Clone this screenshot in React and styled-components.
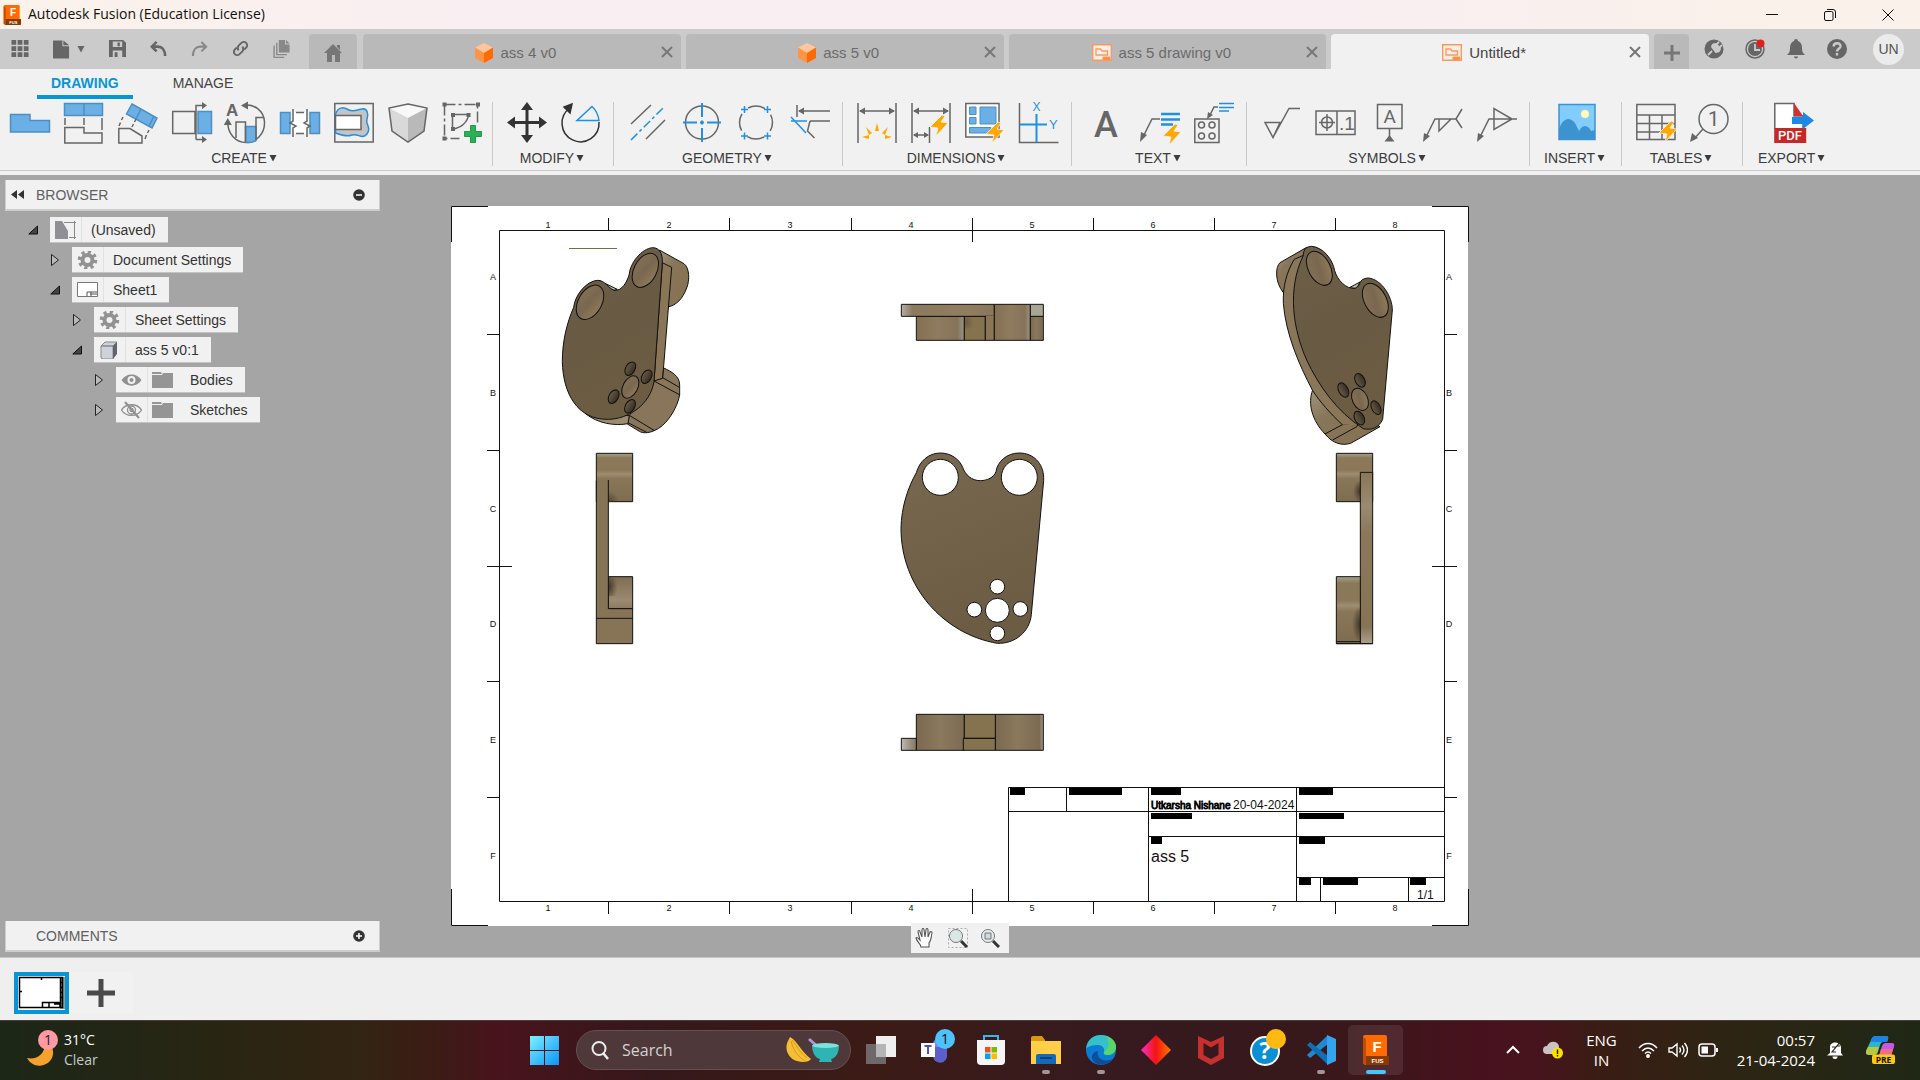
import React from "react";
import styled, { createGlobalStyle } from "styled-components";

const UI = '"Liberation Sans", Arial, sans-serif';
const SYS = '"Open Sans", "Segoe UI", sans-serif';
const BLUE = "#0696d7";
const INK = "#666666";
const FILL = "#6aafe6";
const FILL_EDGE = "#4f8fc0";
const LINE = "#1e90e6";
const ORANGE = "#ffa800";

const GlobalStyle = createGlobalStyle`
  * { box-sizing: border-box; }
  html, body { margin: 0; padding: 0; }
  body { font-family: ${UI}; background: #a5a5a5; }
  button { font: inherit; color: inherit; background: none; border: 0; padding: 0; margin: 0; }
  ul { list-style: none; margin: 0; padding: 0; }
  svg { display: block; flex: none; }
`;

const Window = styled.div`
  min-height: 100vh;
  display: flex;
  flex-direction: column;
`;

/* ---------- title bar ---------- */

const TitleBar = styled.header`
  display: flex;
  align-items: center;
  gap: 7px;
  height: 29px;
  padding-left: 3px;
  background: linear-gradient(90deg, #fbf2ea 0, #f9eff2 24%, #f9eff3 68%, #faf1ea 92%, #faf1ea 100%);
`;

const WindowTitle = styled.h1`
  flex: 1;
  margin: 0;
  padding-bottom: 1px;
  font: 400 14px/20px ${SYS};
  color: #111;
`;

const WindowButton = styled.button`
  display: grid;
  place-items: center;
  width: 58px;
  height: 28px;
`;

const WindowButtons = styled.div`
  display: flex;
  padding-right: 3px;
`;

/* ---------- document tabs ---------- */

const TabBar = styled.div`
  display: flex;
  align-items: flex-end;
  height: 40px;
  background: #cbcbcb;
`;

const QuickActions = styled.div`
  display: flex;
  align-items: center;
  gap: 24px;
  height: 40px;
  padding: 0 19px 0 11px;
  color: ${INK};
`;

const QuickButton = styled.button`
  display: flex;
  align-items: center;
  gap: 7px;
  opacity: ${(p) => (p.$dim ? 0.65 : 1)};
`;

const SquareTab = styled.button`
  display: grid;
  place-items: center;
  width: ${(p) => p.$width}px;
  height: 35px;
  padding-top: 2px;
  border-radius: 4px 4px 0 0;
  background: #b9b9b9;
  color: #777;
`;

const Documents = styled.nav`
  flex: 1;
  display: flex;
  gap: 5px;
  margin: 0 5px 0 6px;
  min-width: 0;
`;

const DocumentTab = styled.div`
  flex: 1;
  display: flex;
  align-items: center;
  height: 35px;
  padding: 0 8px;
  border-radius: 4px 4px 0 0;
  background: ${(p) => (p.$active ? "#f1f1f1" : "#b9b9b9")};
  color: ${(p) => (p.$active ? "#444" : "#6b6b6b")};
  font-size: 15px;
  line-height: 18px;
`;

const DocumentName = styled.button`
  flex: 1;
  display: flex;
  align-items: center;
  justify-content: center;
  gap: 7px;
  height: 35px;
  padding-top: 2px;
`;

const CloseButton = styled.button`
  color: #777;
`;

const Account = styled.div`
  display: flex;
  align-items: center;
  gap: 21px;
  height: 40px;
  padding: 0 16px 0 15px;
  color: ${INK};
`;

const Avatar = styled.button`
  width: 31px;
  height: 31px;
  margin-left: 5px;
  border-radius: 50%;
  background: #ebebeb;
  color: #555;
  font-size: 14px;
`;

/* ---------- ribbon ---------- */

const Ribbon = styled.section`
  background: #f1f1f1;
  border-bottom: 4px solid #f1f1f1;
`;

const RibbonTabs = styled.nav`
  display: flex;
  gap: 26px;
  height: 30px;
  padding-left: 37px;
`;

const RibbonTab = styled.button`
  height: 30px;
  padding: 1px 14px 0;
  border-bottom: 4px solid ${(p) => (p.$active ? BLUE : "transparent")};
  color: ${(p) => (p.$active ? BLUE : "#444")};
  font-weight: ${(p) => (p.$active ? 700 : 400)};
  font-size: 14px;
  line-height: 22px;
`;

const Groups = styled.div`
  display: flex;
  height: 72px;
  padding-top: 3px;
  border-bottom: 1px solid #c9c9c9;
`;

const Group = styled.div`
  display: flex;
  flex-direction: column;
  align-items: center;
  gap: 5px;
  height: 64px;
  min-width: ${(p) => p.$min || 0}px;
  padding: ${(p) => (p.$first ? "0 10px" : "0 12px 0 14px")};
  border-right: 1px solid ${(p) => (p.$last ? "transparent" : "#c8c8c8")};
`;

const Tools = styled.div`
  display: flex;
  gap: 14px;
  height: 42px;
`;

const Tool = styled.button`
  width: 40px;
  height: 42px;
`;

const GroupMenu = styled.button`
  display: flex;
  align-items: center;
  gap: 2px;
  padding-right: 4px;
  color: #3c3c3c;
  font-size: 14px;
  line-height: 18px;
`;

/* ---------- canvas ---------- */

const Canvas = styled.main`
  flex: 1;
  position: relative;
  display: grid;
  grid-template-columns: 1fr minmax(0, 1020px) 1fr;
  background: #a5a5a5;
`;

const Side = styled.aside`
  display: flex;
  flex-direction: column;
  padding: 5px;
  min-width: 0;
`;

const PanelHeader = styled.div`
  display: flex;
  align-items: center;
  max-width: 375px;
  height: 31px;
  padding: 0 14px 0 5px;
  background: #f1f1f1;
  border: solid #cdcdcd;
  border-width: 0 1px 2px 1px;
`;

const PanelName = styled.h2`
  flex: 1;
  margin: 0;
  padding-left: ${(p) => (p.$bare ? 25 : 12)}px;
  color: #606060;
  font-weight: 400;
  font-size: 14px;
  line-height: 18px;
`;

const Tree = styled.ul`
  flex: 1;
  display: flex;
  flex-direction: column;
  gap: 4px;
  padding-top: 6px;
`;

const Node = styled.li`
  display: flex;
  align-items: center;
  gap: 10px;
  padding-left: ${(p) => 23 + 22 * p.$level}px;
`;

const NodeBox = styled.div`
  display: flex;
  align-items: center;
  height: 26px;
  background: #f1f1f1;
  border-bottom: 1px solid #c4c4c4;
`;

const NodeIcon = styled.span`
  display: grid;
  place-items: center;
  width: 32px;
  height: 25px;
  border-right: 1px solid #e2e2e2;
`;

const FolderIcon = styled.span`
  padding: 0 8px 0 4px;
`;

const NodeName = styled.span`
  padding: 0 12px 0 9px;
  color: #333;
  font-size: 14px;
  line-height: 18px;
`;

const SheetArea = styled.div`
  padding-top: 30px;
  svg { width: 100%; height: auto; }
`;

const ViewTools = styled.div`
  position: absolute;
  left: 50%;
  bottom: 4px;
  display: flex;
  justify-content: space-between;
  width: 98px;
  height: 30px;
  padding: 5px 9px 5px 4px;
  transform: translateX(-50%);
  background: #f1f1f1;
`;

const SheetBar = styled.footer`
  display: flex;
  align-items: flex-start;
  height: 63px;
  padding: 14px 14px 0;
  border-top: 1px solid #c6c6c6;
  background: #efefef;
`;

const SheetThumb = styled.button`
  width: 55px;
  height: 42px;
  border: 4px solid ${BLUE};
  background: #fff;
`;

const AddSheet = styled.button`
  display: grid;
  place-items: center;
  width: 64px;
  height: 42px;
  background: #f1f1f1;
`;

/* ---------- system taskbar ---------- */

const Taskbar = styled.footer`
  display: grid;
  grid-template-columns: 1fr auto 1fr;
  align-items: center;
  height: 60px;
  padding-bottom: 1px;
  border-top: 1px solid #4c3c3a;
  color: #fff;
  font-family: ${SYS};
  background: linear-gradient(90deg, #1c2718 0, #272513 10%, #332413 19%, #3a1d14 22%, #48131d 26%, #35181b 34%, #3c1b16 45%, #361a1f 58%, #37181b 68%, #47121d 77%, #47131d 80%, #3a1c14 83%, #2f2414 89%, #1f2815 100%);
`;

const Weather = styled.button`
  display: flex;
  align-items: center;
  gap: 5px;
  padding-left: 26px;
  text-align: left;
  font-size: 14px;
  line-height: 20px;
  color: #fff;
  small { display: block; font-size: 14px; color: #c9c9c3; }
`;

const Apps = styled.div`
  display: flex;
  align-items: center;
  padding-left: 13px;
`;

const SearchBox = styled.label`
  display: flex;
  align-items: center;
  gap: 13px;
  width: 275px;
  height: 40px;
  margin: 0 2px 0 17px;
  padding: 0 11px 0 14px;
  border: 1px solid #66504f;
  border-radius: 20px;
  background: #4e3839;
`;

const SearchInput = styled.input`
  flex: 1;
  min-width: 0;
  padding: 0;
  border: 0;
  outline: 0;
  background: transparent;
  font: 400 16px/22px ${SYS};
  color: #d6d0d0;
  &::placeholder { color: #d6d0d0; opacity: 1; }
`;

const TaskbarApp = styled.button`
  display: flex;
  flex-direction: column;
  align-items: center;
  justify-content: flex-end;
  gap: 5px;
  width: 55px;
  height: 50px;
  padding-bottom: 1px;
  border-radius: 5px;
  background: ${(p) => (p.$current ? "rgba(255,255,255,.09)" : "none")};
`;

const Running = styled.span`
  width: ${(p) => (p.$state === "current" ? 20 : 8)}px;
  height: 4px;
  border-radius: 2px;
  background: ${(p) => (p.$state === "current" ? "#4cc2ff" : p.$state === "open" ? "#a09597" : "transparent")};
`;

const Tray = styled.div`
  display: flex;
  align-items: center;
  justify-content: flex-end;
  padding-right: 24px;
`;

const TrayItem = styled.button`
  margin-left: ${(p) => p.$gap}px;
  padding-bottom: 1px;
  text-align: ${(p) => p.$align || "center"};
  font-size: 15px;
  line-height: 20px;
  color: #fff;
`;

/* ---------- shared glyphs ---------- */

const Caret = () => (
  <svg width="8" height="8" viewBox="0 0 8 8"><path d="M.5 1h7L4 7.500z" fill="currentColor" /></svg>
);

const Bolt = ({ x, y }) => (
  <path transform={`translate(${x} ${y})`} d="M3-10 -9 2-1 3-3 11 9-2 2-3 6-9z" fill={ORANGE} stroke="#f1f1f1" strokeWidth=".8" />
);

const Close = () => (
  <svg width="12" height="12" viewBox="0 0 12 12"><path d="M1 1l10 10M11 1 1 11" stroke="currentColor" strokeWidth="2" /></svg>
);

const FusionLogo = ({ w, h }) => (
  <svg width={w} height={h} viewBox="0 0 27 30">
    <path d="M1 2Q1 0 3 0h20q2 0 2 2v28H3L1 28z" fill="#ff6b00" />
    <path d="M1 2l3 2v26l-3-2z" fill="#c24d00" />
    <path d="M4 21h23v8q0 1-1 1H4z" fill="#8a3a00" />
    <text x="15" y="17" textAnchor="middle" fontFamily="Liberation Sans" fontWeight="700" fontSize="15" fill="#fff">F</text>
    <text x="15.500" y="28" textAnchor="middle" fontFamily="Liberation Sans" fontWeight="700" fontSize="6" fill="#fff">FUS</text>
  </svg>
);

const PartIcon = () => (
  <svg width="18" height="20" viewBox="0 0 18 20">
    <path d="M9 0l9 4.500L9 10 0 4.500z" fill="#ffc59b" />
    <path d="M0 4.500 9 10v10l-9-5z" fill="#ff9447" />
    <path d="M18 4.500 9 10v10l9-5z" fill="#ff6b00" />
  </svg>
);

const DrawingIcon = () => (
  <svg width="20" height="17" viewBox="0 0 20 17" fill="none" stroke="#f79a62">
    <path d="M.7.7h18.600v15.600H.7z" fill="#fbeee6" strokeWidth="1.400" />
    <path d="M4 5h4.500l1.500 2h5.500v4H4z" strokeWidth="1.300" />
    <path d="M11 13h7v3h-7z" fill="#ff8a3c" />
  </svg>
);

/* ---------- ribbon icons ---------- */

const Icon = ({ children }) => (
  <svg width="40" height="42" viewBox="0 0 40 42" fill="none" stroke={INK} strokeWidth="1.500" overflow="visible">{children}</svg>
);

const Arrow = ({ d }) => <path d={d} fill={INK} stroke="none" />;

const glyphs = {
  base: <path d="M.5 12.500h19.500v6h19.500v11.500H.5z" fill={FILL} stroke={FILL_EDGE} />,
  projected: <>
    <path d="M.5 1.500h38v12h-38zM20 1.500v12" fill={FILL} stroke={FILL_EDGE} />
    <path d="M1 16v7M20 16v7M38 16v12M.8 25.500H20V31h18v10H.8z" />
  </>,
  auxiliary: <>
    <path d="M14 2 39 16 34 26 8.500 12zM23 7l-5 10M36 14l-5 10" fill={FILL} stroke={FILL_EDGE} />
    <path d="M.8 26.500H12L24 34v7H.8zM5 15l-1.500 3M2.500 20.500l-1.500 3.500M18 17l-1.500 3M15.500 22l-1.500 3M31 28l-1.500 3M28.500 33l-1.500 4" />
  </>,
  section: <>
    <path d="M.7 9.500H23v22H.7zM24 37.500V3.500h8M24 37.500h8" />
    <Arrow d="M30 0l5 3.500-5 3.500zM30 34l5 3.500-5 3.500z" />
    <path d="M26 9.500h13.500v22H26z" fill={FILL} stroke={FILL_EDGE} />
  </>,
  detail: <>
    <path d="M17 3.500C28 1 38 9 38.500 20 39 32 30 40.500 20 40.500 9 40.500 2 31 1.800 21" />
    <path d="M19.500 24.500H30v14q-5 3-10.500 1.500z" fill={FILL} stroke={FILL_EDGE} />
    <path d="M10 36V20h9.500v20M30 38V15.500h7.500" />
    <Arrow d="M1.800 16l4 7h-8zM15 3.500l7-4v8z" />
    <text x="0" y="14" fontFamily="Liberation Sans" fontSize="17" fontWeight="700" fill={INK} stroke="none">A</text>
  </>,
  breakView: <>
    <path d="M.5 10.500H10v21H.5zM30 10.500h9.500v21H30z" fill={FILL} stroke={FILL_EDGE} />
    <path d="M13 10.500h14v21H13z" fill="#fff" stroke="none" />
    <path d="M13 7v12l-3 2 6 3-3 2v9M27 7v12l-3 2 6 3-3 2v9M16 10.500h8M16 31.500h8" />
  </>,
  breakout: <>
    <path d="M.8 1.500h38.400V40H.8z" />
    <path d="M1.500 12C5 3 11 6 15 8s8 0 13-1 7 5 5 10 5 9 0 15-9-1-15 1-11 0-16.500-2z" fill="#c4c4c4" stroke={LINE} />
    <path d="M1.500 13.500H27v14H1.500z" fill="#fff" />
  </>,
  solid: <>
    <path d="M20 2 39 6 20 16 1 6z" fill="#f8f8f8" stroke="none" />
    <path d="M1 6 20 16v24L4 29z" fill="#d9d9d9" stroke="none" />
    <path d="M39 6 20 16v24l16-11z" fill="#b9b9b9" stroke="none" />
    <path d="M20 2 39 6 36 29 20 40 4 29 1 6z" />
  </>,
  sketch: <>
    <path d="M2.500 2.500h33v20M2.500 2.500v34h15" strokeDasharray="11 3 3 3" />
    <path d="M10.500 26V12.500h16C26 20 19 26 10.500 27" />
    <Arrow d="M.5.500h4v4h-4zM34 .5h4v4h-4zM.5 34.500h4v4h-4zM9 11h4v4H9zM24.500 11h4v4h-4zM9 25h4v4H9z" />
    <path d="M28.500 23.500h5v6h6v5h-6v6h-5v-6h-6v-5h6z" fill="#2bb055" stroke="#1f9a46" strokeWidth="1" />
  </>,
  move: <>
    <path d="M20 4v33M3 20.500h34" stroke="#333" strokeWidth="3" />
    <path d="M20 0l6 8H14zM20 41l6-8H14zM0 20.500l8-6v12zM40 20.500l-8-6v12z" fill="#333" stroke="none" />
  </>,
  rotate: <>
    <path d="M9 6A18.500 18.500 0 1 0 38 20" stroke="#333" />
    <path d="M11 2 9 11 3 5z" fill="#333" stroke="#333" />
    <path d="M38 18.500H16L31 4.500Q37 10 38 18.500z" stroke={LINE} />
  </>,
  centerline: <>
    <path d="M3 22 23 3M18 37 37 18" />
    <path d="M3 38 37 4" stroke={LINE} strokeDasharray="9 3 3 3" />
  </>,
  centermark: <>
    <circle cx="20" cy="20.500" r="16.500" />
    <path d="M20 1v14M20 26v14M1 20.500h14M25 20.500h14M18 20.500h4M20 18.500v4" stroke={LINE} strokeWidth="2" />
  </>,
  centerpattern: <>
    <circle cx="20" cy="20.500" r="16.500" strokeDasharray="17.500 8.420" strokeDashoffset="8.700" />
    <path d="M5 7.500h7M8.500 4v7M28 7.500h7M31.500 4v7M5 34h7M8.500 30.500v7M28 34h7M31.500 30.500v7" stroke={LINE} />
  </>,
  edge: <>
    <path d="M7 3v12M9 9h31M20 19h20M20 19l-2.500 10 7 7" />
    <Arrow d="M8 9l6-3.500v7z" />
    <path d="M1 19h16M1 15l15 16" stroke={LINE} />
  </>,
  dimension: <>
    <path d="M1 1v40M39 1v40M3 9h34" />
    <Arrow d="M2 9l6-3.500v7zM38 9l-6-3.500v7z" />
    <path d="M20 21l2 8h-4zM9 25l6 6-3 2zM31 25l-6 6 3 2zM5 35l7-2v4zM35 35l-7-2v4z" fill={ORANGE} stroke="none" />
  </>,
  autoDimension: <>
    <path d="M1 1v40M39 1v40M3 9h34M18.500 25v16M3 33h14" />
    <Arrow d="M2 9l6-3.500v7zM38 9l-6-3.500v7zM2 33l5-3v6zM18 33l-5-3v6z" />
    <Bolt x={28} y={23} />
  </>,
  autoSheet: <>
    <path d="M.8 1.500H34V35H.8z" fill="#fff" />
    <path d="M4.500 5H11v7.500H4.500zM15 5h16v17H15zM4.500 15.500H11V22H4.500zM4.500 25.500H26V31H4.500z" fill={FILL} stroke={FILL_EDGE} strokeWidth="1" />
    <Bolt x={30} y={30} />
  </>,
  ordinate: <>
    <path d="M.5 1v39.500h39" />
    <path d="M17.500 12v28M1 22.500h27" stroke={LINE} strokeWidth="2" />
    <text x="13.500" y="9" fontFamily="Liberation Sans" fontSize="12" fill={LINE} stroke="none">X</text>
    <text x="30" y="27" fontFamily="Liberation Sans" fontSize="13" fill={LINE} stroke="none">Y</text>
  </>,
  text: <text x="20" y="35" textAnchor="middle" fontFamily="Roboto" fontWeight="500" fontSize="36" fill={INK} stroke="none">A</text>,
  leader: <>
    <path d="M3 35 12 17h8" />
    <Arrow d="M0 40l1-10 6 3z" />
    <path d="M21 12h19M21 17.500h19M21 22.500h12" stroke={LINE} strokeWidth="2.500" />
    <Bolt x={32} y={32} />
  </>,
  holeNote: <>
    <path d="M.8 17H25v23.500H.8zM16 13l4-8h4" />
    <Arrow d="M13 17l1-7 5 3z" />
    <circle cx="7.500" cy="23" r="3" /><circle cx="18" cy="23" r="3" />
    <circle cx="7.500" cy="34" r="3" /><circle cx="18" cy="34" r="3" />
    <path d="M25 1.500h15M25 5.500h15M25 9h10" stroke={LINE} />
  </>,
  surface: <path d="M4 20.500h15L12 35.500zM12 35.500 28 6.500h11" />,
  feature: <>
    <path d="M1 9h39v23.500H1zM22 9v23.500M12 12v17M4 20.500h16" />
    <circle cx="12" cy="20.500" r="5.500" />
    <text x="24" y="28" fontFamily="Liberation Sans" fontSize="19" fill={INK} stroke="none">.1</text>
  </>,
  datum: <>
    <path d="M8.500 2.500H33v24H8.500zM20.500 27v8" />
    <Arrow d="M20.500 33l5 6.500h-10z" />
    <text x="20.700" y="21" textAnchor="middle" fontFamily="Roboto" fontSize="19" fill={INK} stroke="none">A</text>
  </>,
  weld: <>
    <path d="M3 35 12 17h21L39 7M33 17l6 9M16 17v12l12-12" />
    <Arrow d="M0 40l1-9 6 3z" />
  </>,
  taper: <>
    <path d="M3 35 12 17h28M17 6.500v21L35 17z" />
    <Arrow d="M0 40l1-9 6 3z" />
  </>,
  image: <>
    <path d="M2 2.500h36v35H2z" fill="#82ccff" stroke="none" />
    <path d="M2 27C6 16 12 14 18 21l4 8c4-8 10-5 12 0l4-1v9.500H2z" fill="#3d93cf" stroke="none" />
    <circle cx="28" cy="12" r="4" fill="#ffffbe" stroke="#f4e98b" strokeWidth=".5" />
    <path d="M2 2.500h36v35H2z" stroke="#3d93cf" />
  </>,
  table: <>
    <path d="M.8 2.500H39v35H.8zM.8 13H39M.8 21.500H39M.8 30H39M13.500 13v24M26 13v24" />
    <Bolt x={32} y={29} />
  </>,
  balloon: <>
    <circle cx="23.500" cy="17" r="14.500" />
    <path d="M13 27 4 37" />
    <Arrow d="M0 40l2-9 6 5z" />
    <text x="23.500" y="24" textAnchor="middle" fontFamily="Roboto" fontSize="20" fill={INK} stroke="none">1</text>
  </>,
  pdf: <>
    <path d="M.8 27V1.500H20V14h9v13" fill="#fff" />
    <path d="M20 1l9 13h-9z" fill="#d32f2f" stroke="none" />
    <path d="M.2 26h32v15H.2z" fill="#c62828" stroke="none" />
    <text x="16" y="38" textAnchor="middle" fontFamily="Roboto" fontSize="13" fontWeight="500" fill="#fff" stroke="none">PDF</text>
    <path d="M18 15h11v-5l11 8.500-11 8.500v-5H18z" fill="#1e88e5" stroke="none" />
  </>,
};

const groups = [
  { name: "CREATE", first: true, tools: ["base", "projected", "auxiliary", "section", "detail", "breakView", "breakout", "solid", "sketch"] },
  { name: "MODIFY", tools: ["move", "rotate"] },
  { name: "GEOMETRY", tools: ["centerline", "centermark", "centerpattern", "edge"] },
  { name: "DIMENSIONS", tools: ["dimension", "autoDimension", "autoSheet", "ordinate"] },
  { name: "TEXT", tools: ["text", "leader", "holeNote"] },
  { name: "SYMBOLS", tools: ["surface", "feature", "datum", "weld", "taper"] },
  { name: "INSERT", tools: ["image"], min: 92 },
  { name: "TABLES", tools: ["table", "balloon"] },
  { name: "EXPORT", tools: ["pdf"], last: true, min: 100 },
];

/* ---------- quick access icons ---------- */

const quick = [
  ["Data panel", 18, <path d="M0 0h5v5H0zM6.500 0h5v5h-5zM13 0h5v5h-5zM0 6.500h5v5H0zM6.500 6.500h5v5h-5zM13 6.500h5v5h-5zM0 13h5v5H0zM6.500 13h5v5h-5zM13 13h5v5h-5z" fill="currentColor" />],
  ["New", 17, <path d="M0 0h10v6h7v13H0zM11 0l6 5h-6z" fill="currentColor" />],
  ["Save", 17, <path fillRule="evenodd" d="M0 0h15l3 3v15H0zM4 1.500v6h10v-6zM4 11v7h10v-7zM9 2.500h2.500v4H9zM6 13h3v5H6z" fill="currentColor" />],
  ["Undo", 17, <path d="M7 2 2 7l5 5M2 7h6c5 0 8 4 8 10" fill="none" stroke="currentColor" strokeWidth="2.800" />],
  ["Redo", 17, <path d="M11 2l5 5-5 5M16 7h-6C5 7 2 11 2 17" fill="none" stroke="currentColor" strokeWidth="2.200" />, true],
  ["Link", 17, <path d="M7 11a4 4 0 0 1 0-5l3-3a3.500 3.500 0 0 1 5 5l-2 2M11 7a4 4 0 0 1 0 5l-3 3a3.500 3.500 0 0 1-5-5l2-2" fill="none" stroke="currentColor" strokeWidth="2" />],
  ["Copies", 17, <path d="M6 0h7v5h5v9H6zM14 0l4 4h-4zM3 3h1.500v12.500H15V17H3zM0 6h1.500v12.500H12V20H0z" fill="currentColor" />, true],
];

/* ---------- sheet drawing ---------- */

const cols = [608.5, 729.5, 851.5, 972.5, 1093.5, 1214.5, 1335.5];
const rows = [334.5, 450.5, 566.5, 681.5, 797.5];
const colNames = [548, 669, 790, 911, 1032, 1153, 1274, 1395];
const rowNames = [277, 393, 509, 624, 740, 856];
const bars = [
  [1010, 788, 15, 7], [1069, 788, 53, 7], [1151, 788, 30, 7], [1299, 788, 34, 7],
  [1151, 813, 41, 6], [1299, 813, 45, 6], [1151, 837, 11, 7], [1299, 837, 26, 7],
  [1299, 878, 12, 7], [1323, 878, 35, 7], [1410, 878, 16, 7],
];

const Hole = ({ x, y, rx, ry, a, fill }) => (
  <ellipse cx={x} cy={y} rx={rx} ry={ry} fill={fill} transform={`rotate(${a} ${x} ${y})`} />
);

const Sheet = () => (
  <svg viewBox="450 205 1020 722" role="img" aria-label="Drawing sheet 1">
    <defs>
      <linearGradient id="face" x1="0" y1="0" x2="0.3" y2="1"><stop offset="0" stopColor="#786850" /><stop offset="1" stopColor="#6c5c43" /></linearGradient>
      <linearGradient id="dark" x1="0" y1="0" x2="0.3" y2="1"><stop offset="0" stopColor="#6e5f49" /><stop offset=".5" stopColor="#695a44" /><stop offset="1" stopColor="#6c5c42" /></linearGradient>
      <linearGradient id="barrel"><stop offset="0" stopColor="#7a6950" /><stop offset=".5" stopColor="#8b795d" /><stop offset="1" stopColor="#7c6b51" /></linearGradient>
      <linearGradient id="barrelEnd"><stop offset="0" stopColor="#7a6950" /><stop offset=".45" stopColor="#8b795d" /><stop offset=".92" stopColor="#7c6b51" /><stop offset="1" stopColor="#a59e90" /></linearGradient>
      <linearGradient id="plate"><stop offset="0" stopColor="#b5b0a3" /><stop offset=".12" stopColor="#8b7a60" /><stop offset=".7" stopColor="#927d5f" /><stop offset="1" stopColor="#8a765a" /></linearGradient>
      <linearGradient id="ends"><stop offset="0" stopColor="#837051" /><stop offset=".45" stopColor="#8f7b5e" /><stop offset=".85" stopColor="#85735a" /><stop offset="1" stopColor="#9b9587" /></linearGradient>
      <linearGradient id="pale"><stop offset="0" stopColor="#bdb9b0" /><stop offset="1" stopColor="#85755c" /></linearGradient>
      <linearGradient id="roll" x1="0" y1="0" x2="0" y2="1"><stop offset="0" stopColor="#a3a48e" /><stop offset=".1" stopColor="#8a7858" /><stop offset=".35" stopColor="#8b7859" /><stop offset=".43" stopColor="#9e8d70" /><stop offset=".52" stopColor="#8a775a" /><stop offset="1" stopColor="#7e6c50" /></linearGradient>
      <linearGradient id="strip" x1="0" y1="0" x2="0" y2="1"><stop offset="0" stopColor="#8a7757" /><stop offset=".2" stopColor="#9b8a70" /><stop offset=".35" stopColor="#8b785b" /><stop offset=".9" stopColor="#877456" /><stop offset="1" stopColor="#aaa08d" /></linearGradient>
      <linearGradient id="low" x1="0" y1="0" x2="0" y2="1"><stop offset="0" stopColor="#7e6d52" /><stop offset=".75" stopColor="#9c8b72" /><stop offset="1" stopColor="#8b7a5f" /></linearGradient>
      <linearGradient id="bore" x1="0" y1="0" x2="1" y2=".4"><stop offset="0" stopColor="#857256" /><stop offset=".6" stopColor="#796750" /><stop offset="1" stopColor="#8b7757" /></linearGradient>
      <linearGradient id="pin"><stop offset="0" stopColor="#6a5a44" /><stop offset="1" stopColor="#352d22" /></linearGradient>
      <radialGradient id="shadeLeft" cx="0" cy=".5" r=".8"><stop offset="0" stopColor="#3d3325" /><stop offset="1" stopColor="#3d3325" stopOpacity="0" /></radialGradient>
      <radialGradient id="shadeRight" cx="1" cy=".5" r=".6"><stop offset="0" stopColor="#3d3325" /><stop offset="1" stopColor="#3d3325" stopOpacity="0" /></radialGradient>
      <radialGradient id="shadeCorner" cx="0" cy="1" r=".9"><stop offset="0" stopColor="#3d3325" /><stop offset="1" stopColor="#3d3325" stopOpacity="0" /></radialGradient>
      <linearGradient id="boss" x1="0" y1="0" x2="1" y2="1"><stop offset="0" stopColor="#a0937c" /><stop offset=".35" stopColor="#88765a" /><stop offset="1" stopColor="#85714f" /></linearGradient>
    </defs>

    <path d="M451 206h1017v720H451z" fill="#fff" />
    <g fill="none" stroke="#111" strokeWidth="1">
      <path d="M451.500 242v-35.500H488M1432 206.500h36.500V242M1468.500 889v36.500H1432M451.500 889v36.500H488" />
      <path d="M499.500 230.500h945v671h-945z" />
      {cols.map((x) => <path key={x} d={x === 972.5 ? `M${x} 218v24M${x} 889v25` : `M${x} 218v12M${x} 902v12`} />)}
      {rows.map((y) => <path key={y} d={y === 566.5 ? `M487 ${y}h25M1432 ${y}h25` : `M487 ${y}h12M1445 ${y}h12`} />)}
      <path d="M1008.500 901V787.500h436M1066.500 788v24M1148.500 788v114M1296.500 788v114M1008.500 811.500h436M1148.500 836.500h296M1296.500 877.500h148M1320.500 878v24M1408.500 878v24" />
    </g>
    <g fontFamily="Liberation Sans" fontSize="9" fill="#111" textAnchor="middle">
      {colNames.map((x, i) => <React.Fragment key={x}><text x={x} y="228">{i + 1}</text><text x={x} y="911">{i + 1}</text></React.Fragment>)}
      {rowNames.map((y, i) => <React.Fragment key={y}><text x="493" y={y + 3}>{"ABCDEF"[i]}</text><text x="1449" y={y + 3}>{"ABCDEF"[i]}</text></React.Fragment>)}
    </g>
    {bars.map(([x, y, w, h]) => <rect key={`${x}-${y}`} x={x} y={y} width={w} height={h} fill="#000" />)}
    <g fontFamily="Liberation Sans" fill="#111" fontSize="12">
      <text x="1151" y="809" fontSize="10" stroke="#000" strokeWidth=".8">Utkarsha Nishane</text>
      <text x="1233" y="809">20-04-2024</text>
      <text x="1151" y="862" fontSize="16">ass 5</text>
      <text x="1417" y="899">1/1</text>
    </g>
    <path d="M569 248.500h48" stroke="#7d6a3f" />

    {/* left isometric and side views, drawn at triple scale */}
    <g transform="translate(540 200) scale(.33333)" stroke="#111" strokeWidth="3" strokeLinejoin="round">
      <path d="M358 150 432 191C448 203 450 240 440 264 428 297 408 316 386 320L370 300z" fill="url(#boss)" />
      <path d="M367 188l28 14-27 333-26 10z" fill="#8a7656" />
      <path d="M371 504C395 515 419 528 419 555v30C412 625 378 680 342 692 325 700 308 700 298 694L262 672 268 646 342 543 368 535z" fill="#88755a" />
      <path d="M368 533 418 562M342 543 418 584M268 646 342 691M264 668 320 697" fill="none" />
      <path d="M135 640C175 672 225 678 264 671L268 647z" fill="#9d8b70" />
      <path d="M195 250 232 268 218 272 200 262z" fill="#b9b5a2" />
      <path d="M367 188C368 160 358 143 338 143 305 145 270 190 268 222 262 245 245 275 222 271 205 265 195 240 172 241 138 244 105 285 101 322 80 370 67 425 67 485 69 580 112 660 205 658 265 657 330 615 342 545z" fill="url(#dark)" />
      <Hole x={150} y={307} rx={35} ry={56} a={30} fill="url(#bore)" />
      <Hole x={316} y={211} rx={34} ry={55} a={28} fill="url(#bore)" />
      <Hole x={271} y={561} rx={22} ry={36} a={28} fill="url(#bore)" />
      <Hole x={271} y={506} rx={14} ry={22} a={30} fill="url(#pin)" />
      <Hole x={320} y={530} rx={14} ry={22} a={30} fill="url(#pin)" />
      <Hole x={221} y={590} rx={14} ry={22} a={30} fill="url(#pin)" />
      <Hole x={270} y={619} rx={14} ry={22} a={30} fill="url(#pin)" />

      <path d="M169 760h109v145h-109z" fill="url(#roll)" />
      <path d="M205 870h36v35h-36z" fill="url(#shadeCorner)" stroke="none" opacity=".7" />
      <path d="M205 1130h73v96h-73z" fill="url(#low)" />
      <path d="M205 1132h34v56h-34z" fill="url(#shadeLeft)" stroke="none" />
      <path d="M169 842h36v384h73v105H169z" fill="#877456" stroke="none" />
      <path d="M205 840v386h73M169 842v489h109v-105M169 1255h109" fill="none" />
    </g>

    {/* top, front and bottom views */}
    <g transform="translate(860 280) scale(.33333)" stroke="#111" strokeWidth="3">
      <path d="M169 109h144v72H169z" fill="url(#ends)" />
      <path d="M313 109h63v72h-63z" fill="#85734f" />
      <path d="M314 110h36v36h-36z" fill="url(#shadeLeft)" stroke="none" opacity=".4" />
      <path d="M124 73h279v36H124z" fill="url(#plate)" />
      <path d="M376 109h27v72h-27z" fill="#8a7656" />
      <path d="M378 107h24v4h-24z" fill="#8a7656" stroke="none" />
      <path d="M403 73h108v108H403z" fill="url(#ends)" />
      <path d="M511 109h39v72h-39z" fill="url(#barrelEnd)" />
      <path d="M511 73h39v36h-39z" fill="#a8a694" />

      <path d="M169 578C178 545 205 519 241 519 272 519 298 537 308 562 316 585 335 602 361 602 382 602 402 592 408 575 412 545 440 519 478 519 520 519 550 550 551 592V602L514 1003C510 1055 465 1092 412 1090 250 1062 123 920 123 745 124 680 145 620 169 578z" fill="url(#face)" />
      <g fill="#fff">
        <circle cx="241" cy="592" r="54" /><circle cx="478" cy="592" r="54" />
        <circle cx="412" cy="991" r="36" /><circle cx="412" cy="920" r="22" />
        <circle cx="343" cy="989" r="22" /><circle cx="481" cy="987" r="22" /><circle cx="412" cy="1060" r="22" />
      </g>

      <path d="M169 1303h144v108H169z" fill="url(#barrel)" />
      <path d="M406 1303h144v108H406z" fill="url(#barrelEnd)" />
      <path d="M313 1303h93v72h-93zM310 1375h96v36h-96z" fill="#85734f" />
      <path d="M124 1375h45v36h-45z" fill="url(#pale)" />
    </g>

    {/* right isometric and side views */}
    <g transform="translate(1240 200) scale(.33333)" stroke="#111" strokeWidth="3" strokeLinejoin="round">
      <path d="M200 142 120 188C106 200 104 245 130 278L170 250z" fill="url(#boss)" />
      <path d="M218 570C203 610 215 660 255 702 278 730 305 738 332 730L420 680 345 640z" fill="url(#boss)" />
      <path d="M190 166 163 178C140 215 128 260 130 310 137 400 175 490 218 572 240 605 270 640 307 674L350 679 365 660 200 400z" fill="#8a7658" />
      <path d="M308 675l42 4" stroke="#8a7658" strokeWidth="5" />
      <path d="M255 702 307 674M278 720 352 679" fill="none" />
      <path d="M328 263 360 246 350 266z" fill="#b9b5a2" />
      <path d="M215 139C250 142 278 178 284 212 292 240 318 268 345 265 366 258 352 236 385 234 425 238 457 290 457 330L428 658C418 682 395 692 370 686 290 635 235 555 200 480 160 390 140 270 190 166 190 148 200 139 215 139z" fill="url(#dark)" />
      <Hole x={238} y={205} rx={33} ry={55} a={-28} fill="url(#bore)" />
      <Hole x={406} y={301} rx={33} ry={55} a={-28} fill="url(#bore)" />
      <Hole x={360} y={598} rx={23} ry={35} a={-25} fill="url(#bore)" />
      <Hole x={360} y={541} rx={14} ry={22} a={-28} fill="url(#pin)" />
      <Hole x={310} y={570} rx={14} ry={23} a={-28} fill="url(#pin)" />
      <Hole x={408} y={623} rx={13} ry={22} a={-28} fill="url(#pin)" />
      <Hole x={358} y={654} rx={14} ry={22} a={-28} fill="url(#pin)" />

      <path d="M289 760h109v145H289z" fill="url(#roll)" />
      <path d="M289 1130h73v201h-73z" fill="url(#roll)" />
      <path d="M325 845h36v58h-36zM325 1228h36v94h-36z" fill="none" stroke="none" />
      <path d="M325 845h36v58h-36z" fill="url(#shadeRight)" stroke="none" />
      <path d="M320 1225h41v96h-41z" fill="url(#shadeRight)" stroke="none" />
      <path d="M361 817h37v514h-37z" fill="url(#strip)" />
      <path d="M289 1325h72M289 1331h109" fill="none" />
    </g>
  </svg>
);

/* ---------- tree ---------- */

const Toggle = ({ open }) => (
  <svg width="12" height="14" viewBox="0 0 12 14">
    {open ? <path d="M9.500 3v8H.8z" fill="#444" stroke="#111" /> : <path d="M1.500 1.500v11l7-5.500z" fill="#bbb" stroke="#222" />}
  </svg>
);

const treeGlyphs = {
  drawing: <><path d="M0 0h7l6 10v8H0z" fill="#8f8f95" /><path d="M9 1.500h12M19.500 0v18M14 16.500h7" stroke="#888" fill="none" /></>,
  gear: <g fill="none" stroke="#929292"><circle cx="10.500" cy="9" r="5" strokeWidth="4" /><circle cx="10.500" cy="9" r="8" strokeWidth="3.500" strokeDasharray="3.140 3.140" /></g>,
  sheet: <><path d="M.5 1.500h20v14H.5z" fill="#fff" stroke="#777" /><path d="M10 15v-4h10M13 13h7M14 11v4" stroke="#555" fill="none" /></>,
  body: <><path d="M2 5l4-4h12l-4 4zM2 5h12v13H4q-2 0-2-2z" fill="#cfd2da" stroke="#888" /><path d="M14 5l4-4v12l-4 5z" fill="#62646c" /></>,
  eye: <><path d="M.5 9C5 1.500 16 1.500 20.500 9 16 16.500 5 16.500.5 9z" fill="#909090" /><circle cx="10.500" cy="9" r="4" fill="#f1f1f1" /><circle cx="10.500" cy="9" r="2" fill="#909090" /></>,
  hidden: <g fill="none" stroke="#909090" strokeWidth="1.300"><path d="M.5 9C5 2 16 2 20.500 9 16 16 5 16 .5 9z" /><circle cx="10.500" cy="9" r="4" /><circle cx="10.500" cy="9" r="1.500" /><path d="M4 1l14 16" strokeWidth="2" /></g>,
  folder: <path d="M0 1h9l1 2H0zM0 4h10l1-2h10v15H0z" fill="#959595" />,
};

const TreeGlyph = ({ name }) => <svg width="21" height="18" viewBox="0 0 21 18">{treeGlyphs[name]}</svg>;

const nodes = [
  [0, true, "drawing", "(Unsaved)"],
  [1, false, "gear", "Document Settings"],
  [1, true, "sheet", "Sheet1"],
  [2, false, "gear", "Sheet Settings"],
  [2, true, "body", "ass 5 v0:1"],
  [3, false, "eye", "Bodies", true],
  [3, false, "hidden", "Sketches", true],
];

const Dot = ({ plus }) => (
  <svg width="12" height="12" viewBox="0 0 12 12"><circle cx="6" cy="6" r="5.800" fill="#333" /><path d={plus ? "M3 6h6M6 3v6" : "M3 6h6"} stroke="#fff" strokeWidth="1.500" /></svg>
);

/* ---------- taskbar apps ---------- */

const apps = [
  ["Task view", "", <><path d="M10 1h20v21H10z" fill="#efefef" /><path d="M0 9h20v20H0z" fill="#777" opacity=".85" /><path d="M10 9h10v13H10z" fill="#b5b5b5" /></>],
  ["Teams", "", <><circle cx="17" cy="9" r="5" fill="#7b83eb" /><path d="M10 12h16v7a7 7 0 0 1-14 3z" fill="#5b5fc7" /><path d="M0 8h14v14H0z" fill="#fff" /><path d="M3.500 11h7M7 11v8" stroke="#4b53bc" strokeWidth="2" /><circle cx="24" cy="4" r="10" fill="#4cc2ff" /><text x="24" y="9" textAnchor="middle" fontSize="14" fill="#111">1</text></>],
  ["Store", "", <><path d="M8 6V1h14v5" fill="none" stroke="#35b5f1" strokeWidth="2" /><path d="M1 5h28v21q0 4-4 4H5q-4 0-4-4z" fill="#f5f5f5" /><path d="M9 12h5.500v5.500H9z" fill="#f25022" /><path d="M15.500 12H21v5.500h-5.500z" fill="#7fba00" /><path d="M9 18.500h5.500V24H9z" fill="#00a4ef" /><path d="M15.500 18.500H21V24h-5.500z" fill="#ffb900" /></>],
  ["File Explorer", "open", <><path d="M0 3q0-2 2-2h9l3 4v5H0z" fill="#d9990f" /><path d="M0 6h30v23H0z" fill="#ffcf48" /><path d="M5 21q0-2 2-2h16q2 0 2 2v8H5z" fill="#0f6cbd" /><path d="M9 23h12" stroke="#083f73" strokeWidth="2" /></>],
  ["Edge", "open", <><circle cx="15" cy="15" r="15" fill="#0c7bd0" /><path d="M0 14C1 4 8 0 15 0c9 0 15 6 15 12 0 5-4 8-8 8-3 0-5-1-4-3 1-3-1-7-6-7S2 11 0 14z" fill="#35c1c9" /><path d="M20 1c6 2 10 6 10 11 0 5-4 8-8 8-3 0-5-1-4-3 5-3 6-10 2-16z" fill="#58d66a" /><path d="M12 16c-2 7 5 12 15 8-5 7-14 7-19 3-4-4-2-10 4-11z" fill="#0a4f9c" /></>],
  ["Diamond", "", <><defs><linearGradient id="dia"><stop offset="0" stopColor="#ff2ec0" /><stop offset=".5" stopColor="#f31313" /><stop offset="1" stopColor="#ff7a00" /></linearGradient></defs><path d="M15 0l15 15-15 15L0 15z" fill="url(#dia)" /></>],
  ["McAfee", "", <path d="M2 1l13 6 13-6v22l-13 7-13-7zM7.500 8v12L15 24l7.500-4V8L15 12.500z" fill="#c8302f" fillRule="evenodd" />],
  ["Help", "", <><circle cx="14" cy="16" r="14" fill="#0a8fd6" stroke="#fff" strokeWidth="2" /><text x="14" y="24" textAnchor="middle" fontSize="23" fontWeight="700" fill="#fff">?</text><circle cx="25" cy="4" r="10" fill="#ffb90f" /></>],
  ["VS Code", "open", <><path d="M22 0v9L4 23l-3-3z" fill="#1f8ad2" /><path d="M22 30v-9L4 7 1 10z" fill="#0f6fb3" /><path d="M21 0l9 4v22l-9 4z" fill="#35a4ee" /></>],
];

export default function App() {
  return (
    <Window>
      <GlobalStyle />
      <TitleBar>
        <FusionLogo w={18} h={20} />
        <WindowTitle>Autodesk Fusion (Education License)</WindowTitle>
        <WindowButtons>
          <WindowButton aria-label="Minimize"><svg width="12" height="12"><path d="M0 5.500h12" stroke="#111" /></svg></WindowButton>
          <WindowButton aria-label="Restore"><svg width="12" height="12" viewBox="0 0 12 12" fill="none" stroke="#111"><rect x=".5" y="2.500" width="8.500" height="9" rx="1.500" /><path d="M3 .5h6q2.500 0 2.500 2.500v6" /></svg></WindowButton>
          <WindowButton aria-label="Close"><svg width="12" height="12"><path d="M.5.500l11 11M11.500.500l-11 11" stroke="#111" /></svg></WindowButton>
        </WindowButtons>
      </TitleBar>

      <TabBar>
        <QuickActions>
          {quick.map(([label, w, shape, dim]) => (
            <QuickButton key={label} aria-label={label} $dim={dim}>
              <svg width={w} height={label === "New" ? 19 : 18} viewBox={label === "Copies" ? "0 0 18 20" : "0 0 18 19"}>{shape}</svg>
              {label === "New" && <Caret />}
            </QuickButton>
          ))}
        </QuickActions>
        <SquareTab $width={48} aria-label="Home">
          <svg width="18" height="18" viewBox="0 0 18 18"><path d="M9 0l9 9h-2v9h-5v-7H8v7H3V9H0zM13 1h3v5l-3-3z" fill="currentColor" /></svg>
        </SquareTab>
        <Documents>
          {[["ass 4 v0", PartIcon], ["ass 5 v0", PartIcon], ["ass 5 drawing v0", DrawingIcon], ["Untitled*", DrawingIcon]].map(([name, Glyph], i) => (
            <DocumentTab key={name} $active={i === 3}>
              <DocumentName><Glyph />{name}</DocumentName>
              <CloseButton aria-label={`Close ${name}`}><Close /></CloseButton>
            </DocumentTab>
          ))}
        </Documents>
        <SquareTab $width={35} aria-label="New tab">
          <svg width="16" height="16"><path d="M8 0v16M0 8h16" stroke="currentColor" strokeWidth="3" /></svg>
        </SquareTab>
        <Account>
          <button aria-label="Extensions"><svg width="20" height="20" viewBox="0 0 20 20"><circle cx="10" cy="10" r="9.500" fill="currentColor" /><path d="M4 16l4-4M8 8l4 5c3 0 4-2 4-4l-4-4c-3 0-4 1-4 3zM12 6l3-3M15 9l3-3" fill="#cbcbcb" stroke="#cbcbcb" strokeWidth="1.800" /></svg></button>
          <button aria-label="Job status"><svg width="20" height="20" viewBox="0 0 20 20"><circle cx="10" cy="10" r="9" fill="none" stroke="currentColor" strokeWidth="1.500" /><circle cx="10" cy="10" r="7" fill="currentColor" /><path d="M10 5v6h5" fill="none" stroke="#cbcbcb" strokeWidth="1.800" /><circle cx="15.500" cy="4.500" r="4" fill="#e02020" /></svg></button>
          <button aria-label="Notifications"><svg width="20" height="20" viewBox="0 0 20 20"><path d="M10 0q2 0 2 2c3 1 4 4 4 7 0 4 1 5 3 7H1c2-2 3-3 3-7 0-3 1-6 4-7q0-2 2-2zM8 17.500h4q0 2-2 2t-2-2z" fill="currentColor" /></svg></button>
          <button aria-label="Help"><svg width="20" height="20" viewBox="0 0 20 20"><circle cx="10" cy="10" r="10" fill="currentColor" /><path d="M6.500 7.500C7 3 14 3.500 13.500 7.500 13 10 10 9.500 10 12.500M10 14v2.500" fill="none" stroke="#cbcbcb" strokeWidth="2.400" /></svg></button>
          <Avatar>UN</Avatar>
        </Account>
      </TabBar>

      <Ribbon>
        <RibbonTabs>
          <RibbonTab $active>DRAWING</RibbonTab>
          <RibbonTab>MANAGE</RibbonTab>
        </RibbonTabs>
        <Groups>
          {groups.map((g) => (
            <Group key={g.name} $first={g.first} $last={g.last} $min={g.min}>
              <Tools>
                {g.tools.map((t) => <Tool key={t} aria-label={t}><Icon>{glyphs[t]}</Icon></Tool>)}
              </Tools>
              <GroupMenu>{g.name}<Caret /></GroupMenu>
            </Group>
          ))}
        </Groups>
      </Ribbon>

      <Canvas>
        <Side>
          <PanelHeader>
            <button aria-label="Collapse browser"><svg width="13" height="9"><path d="M6 0v9L0 4.500zM13 0v9L7 4.500z" fill="#333" /></svg></button>
            <PanelName>BROWSER</PanelName>
            <button aria-label="Hide browser"><Dot /></button>
          </PanelHeader>
          <Tree>
            {nodes.map(([level, open, icon, name, folder]) => (
              <Node key={name} $level={level}>
                <button aria-label={`Toggle ${name}`}><Toggle open={open} /></button>
                <NodeBox>
                  <NodeIcon><TreeGlyph name={icon} /></NodeIcon>
                  {folder && <FolderIcon><TreeGlyph name="folder" /></FolderIcon>}
                  <NodeName>{name}</NodeName>
                </NodeBox>
              </Node>
            ))}
          </Tree>
          <PanelHeader>
            <PanelName $bare>COMMENTS</PanelName>
            <button aria-label="Show comments"><Dot plus /></button>
          </PanelHeader>
        </Side>
        <SheetArea><Sheet /></SheetArea>
        <ViewTools>
          <button aria-label="Pan"><svg width="20" height="20" viewBox="0 0 20 20"><path d="M6 19c0-3-4-5-5-9 1-1 2 0 4 2L3 4c0-2 2-2 2 0l2 5V2c0-2 2-2 2 0l1 7 1-7c0-2 2-2 2 0v7l2-5c1-1 2 0 2 1-1 5-1 8-3 10v4z" fill="#fff" stroke="#555" strokeWidth="1.100" /></svg></button>
          <button aria-label="Zoom"><svg width="20" height="20" viewBox="0 0 20 20"><path d="M.5.500h19v19H.5z" fill="none" stroke="#aaa" strokeDasharray="2 2" /><path d="M13 13l6 6" stroke="#333" strokeWidth="3" /><circle cx="8" cy="8" r="6.500" fill="#d9e8e4" stroke="#777" /></svg></button>
          <button aria-label="Zoom window"><svg width="20" height="20" viewBox="0 0 20 20"><path d="M13 13l6 6" stroke="#333" strokeWidth="3" /><circle cx="8" cy="8" r="6.500" fill="#e3edf0" stroke="#777" /><path d="M5 5h6v6H5z" fill="#cfd9dc" stroke="#777" /></svg></button>
        </ViewTools>
      </Canvas>

      <SheetBar>
        <SheetThumb aria-label="Sheet1">
          <svg width="47" height="34" viewBox="0 0 47 34"><path d="M42 1h5v32h-5z" fill="#999" /><path d="M1.500 1.500h43v30h-43zM42.500 2v30M2 15.500h2M23.500 2v2M42 6.500h3M42 11.500h3M42 16.500h3M42 21.500h3M24.500 31v-4.500h18M31 27v4M36 28h6v3" fill="none" stroke="#000" strokeWidth="1.500" /></svg>
        </SheetThumb>
        <AddSheet aria-label="Add sheet"><svg width="28" height="28"><path d="M14 0v28M0 14h28" stroke="#4a4a4a" strokeWidth="5" /></svg></AddSheet>
      </SheetBar>

      <Taskbar>
        <Weather>
          <svg width="33" height="40" viewBox="0 0 33 40"><path d="M19 13q9 2 8 11c-1 12-19 17-26 4 9 2 18-3 18-15z" fill="#f6a12b" /><circle cx="22" cy="10" r="10" fill="#ff99a4" /><text x="22" y="15" textAnchor="middle" fontSize="14" fill="#222">1</text></svg>
          <span>31°C<small>Clear</small></span>
        </Weather>
        <Apps>
          <button aria-label="Start">
            <svg width="29" height="29" viewBox="0 0 29 29"><defs><linearGradient id="win" x1="0" y1="0" x2="1" y2="1"><stop offset="0" stopColor="#7df0ff" /><stop offset="1" stopColor="#0a95fa" /></linearGradient></defs><path d="M0 0h14v14H0zM15 0h14v14H15zM0 15h14v14H0zM15 15h14v14H15z" fill="url(#win)" /></svg>
          </button>
          <SearchBox>
            <svg width="18" height="20" viewBox="0 0 18 20"><circle cx="8" cy="8.500" r="6.500" fill="none" stroke="#eee" strokeWidth="2" /><path d="M12.500 13.500 17 19" stroke="#eee" strokeWidth="2.500" /></svg>
            <SearchInput placeholder="Search" aria-label="Search" />
            <svg width="53" height="26" viewBox="0 0 53 26"><path d="M4 0l3 2c5 4 8 12 18 20-2 3-8 4-14 2C2 21-2 12 2 4z" fill="#f4bf34" /><path d="M5 4c2 8 6 15 14 20M6 3c5 6 8 13 15 18" stroke="#d99a1c" fill="none" /><path d="M23 2l9 8" stroke="#a99bd0" strokeWidth="3" /><path d="M26 8h27c0 8-3 13-8 14l1 3H33l1-3c-5-1-8-7-8-14z" fill="#2fb4b4" /><ellipse cx="39.500" cy="8.500" rx="13" ry="2.500" fill="#7fe0dc" /></svg>
          </SearchBox>
          {apps.map(([name, state, shape]) => (
            <TaskbarApp key={name} aria-label={name}>
              <svg width="30" height="30" viewBox="0 0 30 30" overflow="visible">{shape}</svg>
              <Running $state={state} />
            </TaskbarApp>
          ))}
          <TaskbarApp aria-label="Autodesk Fusion" $current>
            <FusionLogo w={27} h={30} />
            <Running $state="current" />
          </TaskbarApp>
        </Apps>
        <Tray>
          <TrayItem $gap={0} aria-label="Hidden icons"><svg width="14" height="9"><path d="M1 8l6-6 6 6" fill="none" stroke="#fff" strokeWidth="2" /></svg></TrayItem>
          <TrayItem $gap={23} aria-label="OneDrive"><svg width="20" height="18" viewBox="0 0 20 18"><path d="M4 13a4 4 0 0 1 0-8c2-5 10-6 12 0v8z" fill="#c9c4c4" /><circle cx="14.500" cy="12" r="5.500" fill="#ffe000" /><path d="M14.500 8.500v4.500M14.500 14v1.500" stroke="#222" strokeWidth="1.500" /></svg></TrayItem>
          <TrayItem $gap={23}>ENG<br />IN</TrayItem>
          <TrayItem $gap={21} aria-label="Wi-Fi"><svg width="20" height="16" viewBox="0 0 20 16" fill="none" stroke="#fff" strokeWidth="1.500"><path d="M1 6c5-6 13-6 18 0M4 9c4-4 8-4 12 0M7 11.500c2-2 4-2 6 0" /><circle cx="10" cy="14" r="1.200" fill="#fff" /></svg></TrayItem>
          <TrayItem $gap={10} aria-label="Volume"><svg width="20" height="16" viewBox="0 0 20 16" fill="none" stroke="#fff" strokeWidth="1.400"><path d="M1 6h3l5-4v12l-5-4H1zM11.500 5.500q2 2.500 0 5M14 3.500q4 4.500 0 9M16.500 1q6 7 0 14" /></svg></TrayItem>
          <TrayItem $gap={10} aria-label="Battery"><svg width="20" height="14" viewBox="0 0 20 14"><rect x="1" y="1" width="16" height="12" rx="3" fill="none" stroke="#fff" strokeWidth="1.500" /><path d="M3.500 3.500H10v7H3.500zM18 5h2v4h-2z" fill="#fff" /></svg></TrayItem>
          <TrayItem $gap={19} $align="right">00:57<br />21-04-2024</TrayItem>
          <TrayItem $gap={12} aria-label="Notifications"><svg width="17" height="18" viewBox="0 0 17 18"><path d="M3 12V6c0-6 10-6 11 0v6l2 2.500H0zM5.500 15.500h5q0 2.500-2.500 2.500t-2.500-2.500z" fill="#fff" /><path d="M5 6h4l-4 5h4M10 1h3l-3 4h3M14 0h3l-3 3h3" fill="none" stroke="#2a2614" strokeWidth="1.200" /></svg></TrayItem>
          <TrayItem $gap={22} aria-label="Copilot"><svg width="30" height="28" viewBox="0 0 30 28"><path d="M6 2q1-2 4-2h10q3 0 2 3l-1 3h-4q-2 0-3 3l-2 7q-1 3-4 3H3q-4 0-3-4z" fill="#2bb6c9" /><path d="M6 2q1-2 4-2h10q3 0 2 3l-1 3H5z" fill="#1d82e2" /><path d="M2 11h11l-2 6q-1 2-3 2H3q-4 0-3-4z" fill="#b8c840" /><path d="M19 7h7q3 0 2 4l-3 9H13l3-10q1-3 3-3z" fill="#c25ae8" /><path d="M15 13h12l-2 7H13z" fill="#f06c8e" /><rect x="6" y="18.500" width="23" height="9.500" rx="2" fill="#ffc90e" /><text x="17.500" y="26.500" textAnchor="middle" fontSize="8.500" fontWeight="700" fill="#111">PRE</text></svg></TrayItem>
        </Tray>
      </Taskbar>
    </Window>
  );
}
